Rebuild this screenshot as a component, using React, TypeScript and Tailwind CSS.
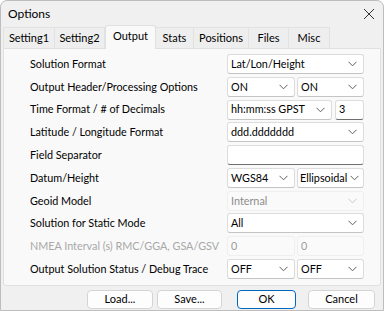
import React from "react";

const font = { fontFamily: "Lato, 'Noto Sans', sans-serif" };

function Chevron({ disabled }: { disabled?: boolean }) {
  return (
    <svg width="9" height="6" viewBox="0 0 9 6" className="shrink-0">
      <path d="M0.5 0.8 L4.5 4.8 L8.5 0.8" fill="none" stroke={disabled ? "#c8c8c8" : "#5f5f5f"} strokeWidth="1" />
    </svg>
  );
}

function Combo({ text, className = "", disabled, tight }: { text: string; className?: string; disabled?: boolean; tight?: boolean }) {
  return (
    <div
      className={`h-[20px] flex items-center justify-between gap-[2px] ${tight ? "pl-[2px] pr-[4px]" : "pl-[3px] pr-[6px]"} rounded-[3px] border ${
        disabled ? "border-[#efefef] bg-[#fafafa] text-[#8c8c8c]" : "border-[#dcdcdc] border-b-[#c4c4c4] bg-white text-black"
      } ${className}`}
    >
      <span className="whitespace-nowrap">{text}</span>
      <Chevron disabled={disabled} />
    </div>
  );
}

function Edit({ text, className = "", disabled }: { text: string; className?: string; disabled?: boolean }) {
  return (
    <div
      className={`h-[20px] flex items-center pl-[3px] rounded-[3px] border ${
        disabled
          ? "border-[#efefef] bg-[#fafafa] text-[#9a9a9a]"
          : "border-[#dcdcdc] border-b-[#6e6e6e] bg-white text-black"
      } ${className}`}
    >
      {text}
    </div>
  );
}

function Row({ label, disabled, children }: { label: string; disabled?: boolean; children: React.ReactNode }) {
  return (
    <div className="h-[20px] flex items-center">
      <div className={`w-[197px] whitespace-nowrap ${disabled ? "text-[#a8a8a8]" : "text-black"}`}>{label}</div>
      <div className="w-[137px] flex gap-[2px]">{children}</div>
    </div>
  );
}

const tabs = [
  { name: "Setting1", w: 52 },
  { name: "Setting2", w: 50 },
  { name: "Output", w: 51, active: true },
  { name: "Stats", w: 38 },
  { name: "Positions", w: 55 },
  { name: "Files", w: 40 },
  { name: "Misc", w: 41 },
];

export default function App() {
  return (
    <div
      className="w-[384px] h-[311px] bg-[#f0f0f0] border border-[#bdbdbd] rounded-t-[7px] text-[10.8px] overflow-hidden flex flex-col"
      style={font}
    >
      {/* title bar */}
      <div className="h-[23px] flex items-center justify-between pl-[7px] pr-[8px] shrink-0">
        <span className="text-[12px] text-black mt-[3px]">Options</span>
        <svg width="12" height="12" viewBox="0 0 12 12" className="mt-[3px]">
          <path d="M1 1 L11 11 M11 1 L1 11" stroke="#333" strokeWidth="1" />
        </svg>
      </div>
      {/* tabs */}
      <div className="flex items-end pl-[2px] h-[24px] shrink-0 text-[11px]">
        {tabs.map((t) =>
          t.active ? (
            <div
              key={t.name}
              className="h-[24px] flex items-center justify-center bg-[#f9f9f9] border border-[#e0e0e0] border-b-0 rounded-t-[3px] relative z-10 -mb-[1px] pb-[2px]"
              style={{ width: t.w }}
            >
              {t.name}
            </div>
          ) : (
            <div
              key={t.name}
              className="h-[21px] flex items-center justify-center bg-[#eeeeee] border-r border-t border-[#e2e2e2] first:border-l"
              style={{ width: t.w }}
            >
              {t.name}
            </div>
          )
        )}
      </div>
      {/* panel */}
      <div className="mx-[2px] h-[238px] bg-[#f9f9f9] border border-[#e0e0e0] rounded-b-[3px] pl-[26px] pt-[5px] pb-[6px] shrink-0">
        <div className="h-full flex flex-col justify-between">
          <Row label="Solution Format">
            <Combo text="Lat/Lon/Height" className="w-full" />
          </Row>
          <Row label="Output Header/Processing Options">
            <Combo text="ON" className="w-[68px]" />
            <Combo text="ON" className="w-[67px]" />
          </Row>
          <Row label="Time Format / # of Decimals">
            <Combo text="hh:mm:ss GPST" className="w-[105px]" />
            <Edit text="3" className="w-[29px] ml-[1px]" />
          </Row>
          <Row label="Latitude / Longitude Format">
            <Combo text="ddd.ddddddd" className="w-full" />
          </Row>
          <Row label="Field Separator">
            <Edit text="" className="w-full" />
          </Row>
          <Row label="Datum/Height">
            <Combo text="WGS84" className="w-[68px]" />
            <Combo text="Ellipsoidal" className="w-[67px]" tight />
          </Row>
          <Row label="Geoid Model">
            <Combo text="Internal" className="w-full" disabled />
          </Row>
          <Row label="Solution for Static Mode">
            <Combo text="All" className="w-full" />
          </Row>
          <Row label="NMEA Interval (s) RMC/GGA, GSA/GSV" disabled>
            <Edit text="0" className="w-[68px]" disabled />
            <Edit text="0" className="w-[67px]" disabled />
          </Row>
          <Row label="Output Solution Status / Debug Trace">
            <Combo text="OFF" className="w-[68px]" />
            <Combo text="OFF" className="w-[67px]" />
          </Row>
        </div>
      </div>
      {/* buttons */}
      <div className="flex justify-end pr-[8px] pt-[4px] text-[11px]">
        <button className="w-[66px] h-[19px] bg-[#fdfdfd] border border-[#d4d4d4] rounded-[4px] flex items-center justify-center">Load...</button>
        <button className="w-[65px] h-[19px] ml-[4px] bg-[#fdfdfd] border border-[#d4d4d4] rounded-[4px] flex items-center justify-center">Save...</button>
        <button className="w-[59px] h-[19px] ml-[15px] bg-[#fdfdfd] border-[1.5px] border-[#0067c0] rounded-[4px] flex items-center justify-center">OK</button>
        <button className="w-[67px] h-[19px] ml-[12px] bg-[#fdfdfd] border border-[#d4d4d4] rounded-[4px] flex items-center justify-center">Cancel</button>
      </div>
    </div>
  );
}
